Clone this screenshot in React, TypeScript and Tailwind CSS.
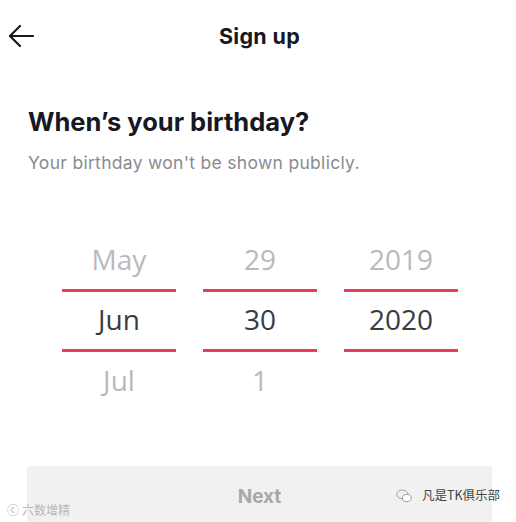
import React from "react";

const cols = [
  { prev: "May", cur: "Jun", next: "Jul" },
  { prev: "29", cur: "30", next: "1" },
  { prev: "2019", cur: "2020", next: "" },
];

export default function App() {
  return (
    <div className="relative w-[516px] h-[522px] overflow-hidden bg-white" style={{ fontFamily: "Inter, 'Noto Sans', sans-serif" }}>
      <div className="relative flex h-[72px] items-center justify-center">
        <svg className="absolute left-[7px] top-[24px]" width="28" height="24" viewBox="0 0 28 24" fill="none" stroke="#161823" strokeWidth="2.2" strokeLinecap="round" strokeLinejoin="round">
          <path d="M26 12H3" />
          <path d="M13 2L3 12l10 10" />
        </svg>
        <span className="ml-[3px] text-[21.5px] font-bold text-[#161823] tracking-[0.3px]">Sign up</span>
      </div>
      <div className="px-[28px] pt-[34px]">
        <h1 className="text-[25.5px] font-bold leading-[32px] text-[#161823]">When’s your birthday?</h1>
        <p className="mt-[14px] text-[17.5px] leading-[22px] text-[#8a8b91] tracking-[0.3px]">Your birthday won't be shown publicly.</p>
      </div>
      <div className="mt-[57px] flex justify-center gap-[27px] pl-[4px]">
        {cols.map((c, i) => (
          <div key={i} className="flex w-[114px] flex-col items-center" style={{ fontFamily: "'Open Sans', sans-serif" }}>
            <div className="flex h-[58px] items-center pb-[2px] text-[28px] text-[#b9b9bc]">{c.prev}</div>
            <div className="h-[3px] w-full bg-[#ec3c57]" />
            <div className="flex h-[57px] items-center pb-[3px] text-[28px] text-[#3a3b41]">{c.cur}</div>
            <div className="h-[3px] w-full bg-[#ec3c57]" />
            <div className="flex h-[58px] items-center pb-[3px] text-[28px] text-[#b9b9bc]">{c.next}</div>
          </div>
        ))}
      </div>
      <div className="ml-[27px] mr-[24px] mt-[56px] flex h-[70px] justify-center rounded-[3px] bg-[#f1f1f2] pt-[17px]">
        <span className="text-[19px] font-bold text-[#a8a8ab]">Next</span>
      </div>
      <div className="absolute bottom-[3px] left-[7px] flex items-center gap-[3px] text-[12px] text-[#b8b8b8]" style={{ fontFamily: "'Noto Sans CJK SC', sans-serif" }}>
        <span>ⓒ</span>
        <span>六数增精</span>
      </div>
      <div className="absolute bottom-[17px] right-[16px] flex items-center gap-[10px] text-[12.5px] text-[#444]" style={{ fontFamily: "'Noto Sans CJK SC', sans-serif" }}>
        <svg width="16" height="14" viewBox="0 0 20 17" fill="none" stroke="#999" strokeWidth="1.2">
          <ellipse cx="8" cy="6.5" rx="7" ry="5.5" />
          <ellipse cx="13.5" cy="11" rx="5.5" ry="4.5" fill="white" />
        </svg>
        <span>凡是TK俱乐部</span>
      </div>
    </div>
  );
}
